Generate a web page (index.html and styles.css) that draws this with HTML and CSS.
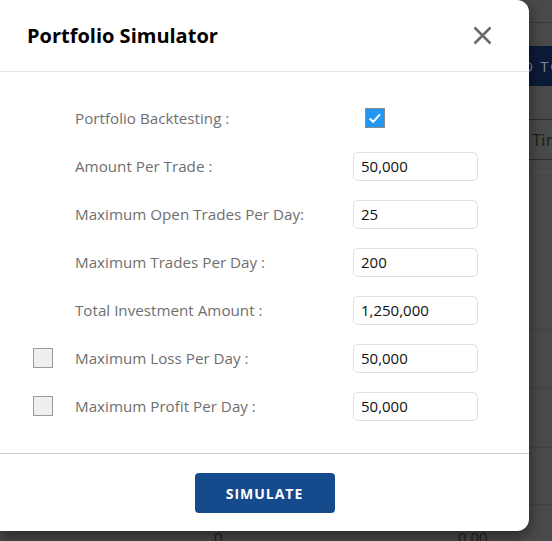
FILE: index.html
```html
<!DOCTYPE html>
<html lang="en">
<head>
<meta charset="utf-8">
<title>Portfolio Simulator</title>
<link rel="stylesheet" href="styles.css">
</head>
<body>
  <!-- page behind the dialog (dimmed) -->
  <div class="page">
    <div class="page-topbar"></div>
    <div class="page-nav"><span class="nav-link">GO TO TRADES</span></div>
    <div class="page-thead"><span class="th">Time</span></div>
    <div class="page-gap"></div>
    <div class="page-row r1"></div>
    <div class="page-row r2"></div>
    <div class="page-row r3"></div>
    <div class="page-row r4"></div>
    <div class="page-row last">
      <span class="cell c1">0</span>
      <span class="cell c2">0.00</span>
    </div>
  </div>

  <div class="modal" role="dialog" aria-labelledby="sim-title">
    <div class="modal-header">
      <h2 id="sim-title" class="modal-title">Portfolio Simulator</h2>
      <button class="close-btn" aria-label="Close">
        <svg width="19" height="19" viewBox="0 0 19 19">
          <path d="M1.5 1.5 L17.5 17.5 M17.5 1.5 L1.5 17.5" stroke="#6b6b6b" stroke-width="2.6" stroke-linecap="butt"/>
        </svg>
      </button>
    </div>

    <div class="modal-body">
      <div class="form-row">
        <span class="opt"></span>
        <label class="label">Portfolio Backtesting :</label>
        <span class="ctrl"><span class="check checked">
          <svg width="18" height="18" viewBox="0 0 18 18"><path d="M3.6 9.4 L7.2 12.8 L14 5.4" fill="none" stroke="#fff" stroke-width="2"/></svg>
        </span></span>
      </div>
      <div class="form-row">
        <span class="opt"></span>
        <label class="label">Amount Per Trade :</label>
        <span class="ctrl"><input class="field" type="text" value="50,000"></span>
      </div>
      <div class="form-row">
        <span class="opt"></span>
        <label class="label">Maximum Open Trades Per Day:</label>
        <span class="ctrl"><input class="field" type="text" value="25"></span>
      </div>
      <div class="form-row">
        <span class="opt"></span>
        <label class="label">Maximum Trades Per Day :</label>
        <span class="ctrl"><input class="field" type="text" value="200"></span>
      </div>
      <div class="form-row">
        <span class="opt"></span>
        <label class="label">Total Investment Amount :</label>
        <span class="ctrl"><input class="field" type="text" value="1,250,000"></span>
      </div>
      <div class="form-row">
        <span class="opt"><span class="check"></span></span>
        <label class="label">Maximum Loss Per Day :</label>
        <span class="ctrl"><input class="field" type="text" value="50,000"></span>
      </div>
      <div class="form-row">
        <span class="opt"><span class="check"></span></span>
        <label class="label">Maximum Profit Per Day :</label>
        <span class="ctrl"><input class="field" type="text" value="50,000"></span>
      </div>
    </div>

    <div class="modal-footer">
      <button class="simulate-btn">SIMULATE</button>
    </div>
  </div>
</body>
</html>
```

FILE: styles.css
```css
* { box-sizing: border-box; }

html, body {
  margin: 0;
  height: 100%;
  overflow: hidden;
}

body {
  background: #4a4a4a;
  font-family: "Open Sans", "Noto Sans", sans-serif;
  position: relative;
}

/* ---- dimmed page behind the dialog ---- */
.page {
  display: flex;
  flex-direction: column;
}

.page-topbar {
  height: 23px;
  border-bottom: 1px solid #3a3a3a;
}

.page-nav {
  margin-top: 23px;
  height: 40px;
  background: #0b1b37;
  display: flex;
  align-items: center;
  padding-left: 509px;
  white-space: nowrap;
}

.nav-link {
  color: #7f8a9c;
  font-size: 15px;
  letter-spacing: 1.6px;
}

.page-thead {
  margin-top: 33px;
  height: 41px;
  border-top: 1px solid #2e2e2e;
  border-bottom: 1px solid #2e2e2e;
  display: flex;
  align-items: center;
  padding-left: 532px;
  white-space: nowrap;
}

.th {
  color: #1c1c1c;
  font-size: 17px;
}

.page-gap {
  height: 13px;
  border-bottom: 1px solid #525252;
}

.page-row {
  border-bottom: 1px solid #414141;
}

.page-row.r1 { height: 157px; }
.page-row.r2 { height: 58px; }
.page-row.r3 { height: 60px; }
.page-row.r4 { height: 57px; }

.page-row.last {
  height: 36px;
  border-bottom: none;
  position: relative;
}

.cell {
  position: absolute;
  top: 22px;
  color: #1e1e1e;
  font-size: 15px;
}
.c1 { left: 214px; }
.c2 { left: 458px; }

/* ---- dialog ---- */
.modal {
  position: absolute;
  left: 0;
  top: 0;
  width: 529px;
  height: 531px;
  background: #fff;
  border-radius: 0 12px 12px 0;
  box-shadow: 0 5px 15px rgba(0, 0, 0, 0.5);
  display: flex;
  flex-direction: column;
}

.modal-header {
  height: 72px;
  padding: 0 37px 0 27px;
  border-bottom: 1px solid #e5e5e5;
  display: flex;
  align-items: center;
  justify-content: space-between;
}

.modal-title {
  margin: 0;
  font-size: 20px;
  font-weight: 700;
  color: #000;
}

.close-btn {
  border: none;
  background: none;
  padding: 0;
  width: 19px;
  height: 19px;
  display: flex;
  margin-top: -1px;
}

.modal-body {
  padding: 22px 0 23px;
  display: flex;
  flex-direction: column;
}

.form-row {
  height: 48px;
  display: grid;
  grid-template-columns: 75px 278px 125px;
  align-items: center;
}

.opt {
  display: flex;
  padding-left: 33px;
}

.label {
  font-size: 15.2px;
  color: #6f6f6f;
}

.ctrl {
  display: flex;
  align-items: center;
}

.field {
  width: 125px;
  height: 29px;
  border: 1px solid #dedee8;
  border-radius: 5px;
  padding: 0 7px;
  font-family: inherit;
  font-size: 15px;
  color: #111;
  outline: none;
}

.check {
  width: 20px;
  height: 20px;
  border: 1px solid #9a9a9a;
  background: #efefef;
  display: flex;
  align-items: center;
  justify-content: center;
}

.check.checked {
  margin-left: 12px;
  background: #2196f3;
  border-color: #8c8c8c;
}

.modal-footer {
  border-top: 1px solid #cccccc;
  padding: 19px 0 18px;
  display: flex;
  justify-content: center;
}

.simulate-btn {
  width: 140px;
  height: 40px;
  border: none;
  border-radius: 4px;
  background: #154a8c;
  color: #fff;
  font-family: inherit;
  font-size: 14px;
  font-weight: 700;
  letter-spacing: 1px;
}
```
